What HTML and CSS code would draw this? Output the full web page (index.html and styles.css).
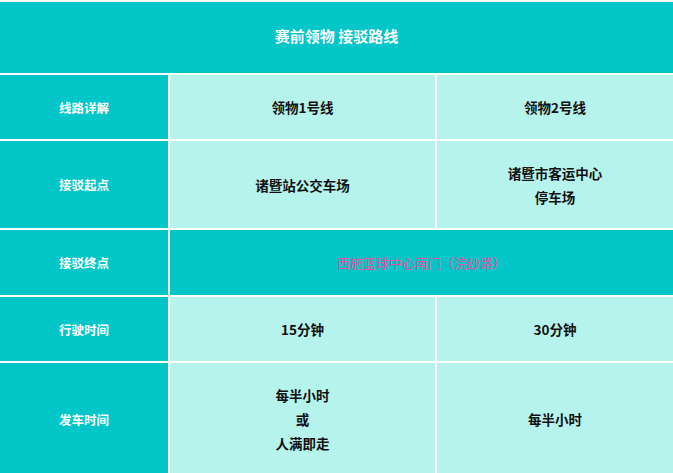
FILE: index.html
```html
<!DOCTYPE html>
<html lang="zh">
<head>
<meta charset="utf-8">
<link rel="stylesheet" href="styles.css">
</head>
<body>
<div class="grid">
  <div class="cell title">赛前领物 接驳路线</div>

  <div class="cell label">线路详解</div>
  <div class="cell val">领物1号线</div>
  <div class="cell val">领物2号线</div>

  <div class="cell label">接驳起点</div>
  <div class="cell val">诸暨站公交车场</div>
  <div class="cell val lines"><span>诸暨市客运中心</span><span>停车场</span></div>

  <div class="cell label">接驳终点</div>
  <div class="cell dest">西施篮球中心南门（浣纱路）</div>

  <div class="cell label">行驶时间</div>
  <div class="cell val">15分钟</div>
  <div class="cell val">30分钟</div>

  <div class="cell label">发车时间</div>
  <div class="cell val lines"><span>每半小时</span><span>或</span><span>人满即走</span></div>
  <div class="cell val">每半小时</div>
</div>
</body>
</html>
```

FILE: styles.css
```css
html, body {
  margin: 0;
  padding: 0;
  background: #ffffff;
  overflow: hidden;
}
body {
  font-family: "Noto Sans CJK SC", "Liberation Sans", sans-serif;
  font-weight: 700;
  font-size: 13.5px;
}
.grid {
  display: grid;
  grid-template-columns: 168px 265px 236px;
  grid-template-rows: 71px 64px 87px 65px 64px 112px;
  gap: 2px;
  padding: 2px 0 0 0;
  width: 673px;
  background: #ffffff;
}
.cell {
  display: flex;
  align-items: center;
  justify-content: center;
  text-align: center;
}
.title {
  grid-column: 1 / 4;
  background: #02c6c7;
  color: #ffffff;
  font-size: 15px;
  padding-bottom: 4px;
}
.label {
  background: #02c6c7;
  color: #ffffff;
  font-size: 12.5px;
}
.val {
  background: #b6f3ed;
  color: #111111;
}
.lines {
  flex-direction: column;
  line-height: 24px;
}
.dest {
  grid-column: 2 / 4;
  background: #02c6c7;
  color: #ea4ea0;
  font-weight: 400;
  font-size: 13px;
}
```
